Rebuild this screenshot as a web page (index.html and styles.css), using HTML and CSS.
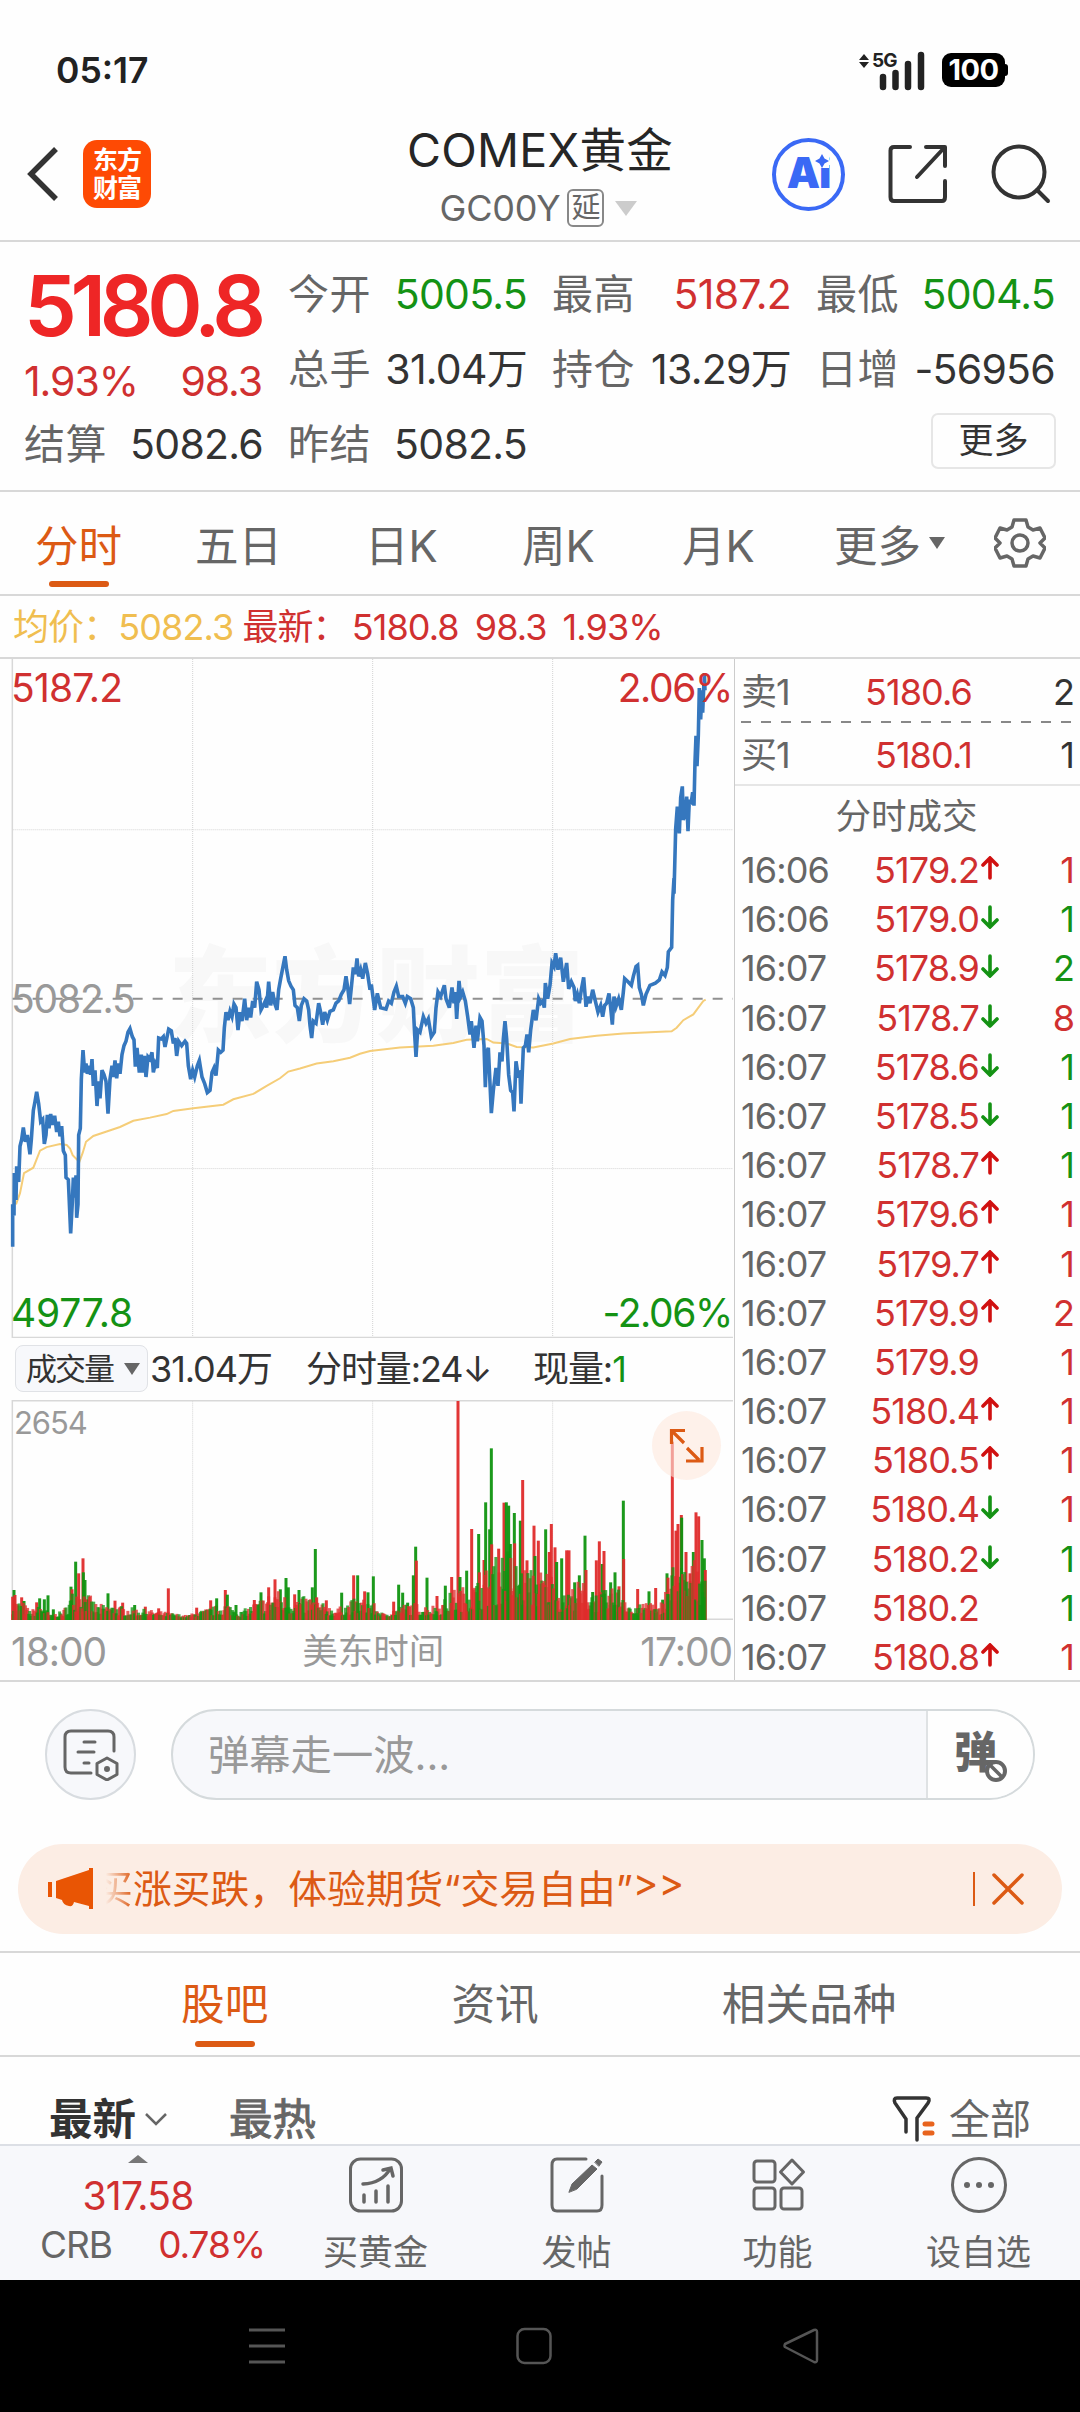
FILE: index.html
```html
<!DOCTYPE html>
<html lang="zh-CN">
<head>
    <meta charset="UTF-8">
    <meta name="viewport" content="width=device-width, initial-scale=1.0">
    <title>COMEX黄金</title>
    <link rel="stylesheet" href="styles.css">
</head>
<body>
    <div class="status-bar">
        <span class="clock">05:17</span>
        <div class="status-icons">
            <svg class="signal" width="70" height="44" viewBox="0 -4 70 44">
                <path d="M6 2l5 6H1zM6 16l5-6H1z" fill="#222"/>
                <text x="14" y="15" class="signal-text">5G</text>
                <path d="M25 25v10M37.500 21v14M50 12v23M63 3v32" stroke="#222" stroke-width="6.500" stroke-linecap="round"/>
            </svg>
            <span class="battery">100</span>
        </div>
    </div>

    <header class="header">
        <div class="header-left">
            <svg width="34" height="56" viewBox="0 0 34 56" fill="none" stroke="#333" stroke-width="5.500"><path d="M31 3L6 28l25 25"/></svg>
            <div class="logo"><span>东方</span><span>财富</span></div>
        </div>
        <div class="header-title">
            <h1>COMEX黄金</h1>
            <div class="code">GC00Y<span class="delay">延</span><i class="caret"></i></div>
        </div>
        <div class="header-right">
            <div class="ai">Ai<svg class="spark" width="14" height="14" viewBox="0 0 14 14"><path d="M7 0l2.500 4.500L14 7l-4.500 2.500L7 14 4.500 9.500 0 7l4.500-2.500z" fill="#3a69f5"/></svg></div>
            <svg width="60" height="60" viewBox="0 0 60 60" fill="none" stroke="#333" stroke-width="4" stroke-linecap="round" stroke-linejoin="round">
                <path d="M22 3H6Q2.500 3 2.500 6.500V53Q2.500 57 6 57H54Q57 57 57 53V37M38 3H57V22M56 4L29 33"/>
            </svg>
            <svg width="60" height="60" viewBox="0 0 60 60" fill="none" stroke="#333" stroke-width="4" stroke-linecap="round">
                <circle cx="28" cy="28" r="25.500"/><path d="M46 46l11 11"/>
            </svg>
        </div>
    </header>

    <section class="quote">
        <div class="last">
            <div class="last-price">5180.8</div>
            <div class="last-change"><span>1.93%</span><span>98.3</span></div>
        </div>
        <div class="cell"><label>今开</label><b class="green">5005.5</b></div>
        <div class="cell"><label>最高</label><b class="red">5187.2</b></div>
        <div class="cell"><label>最低</label><b class="green">5004.5</b></div>
        <div class="cell"><label>总手</label><b>31.04万</b></div>
        <div class="cell"><label>持仓</label><b>13.29万</b></div>
        <div class="cell"><label>日增</label><b>-56956</b></div>
        <div class="cell"><label>结算</label><b>5082.6</b></div>
        <div class="cell"><label>昨结</label><b>5082.5</b></div>
        <div></div>
        <div class="cell more"><span class="more-btn">更多</span></div>
    </section>

    <nav class="period-tabs">
        <span class="active">分时</span>
        <span>五日</span>
        <span>日K</span>
        <span>周K</span>
        <span>月K</span>
        <span class="period-more">更多<i class="caret-sm"></i></span>
        <svg width="52" height="52" viewBox="0 0 52 52" fill="none" stroke="#666" stroke-width="3.500" stroke-linejoin="round">
            <path d="M20 3h12l2 7 5 3 7-2 5 10-5 5 5 5-5 10-7-2-5 3-2 7H20l-2-7-5-3-7 2-5-10 5-5-5-5 5-10 7 2 5-3z"/>
            <circle cx="26" cy="26" r="8"/>
        </svg>
    </nav>

    <div class="legend">
        <span class="avg">均价：5082.3</span>
        <span class="now">最新：<span class="now-price">5180.8</span><em>98.3</em><em>1.93%</em></span>
    </div>

    <section class="market">
        <div class="charts">
            <div class="price-chart">
                <div class="watermark">东方财富</div>
                <svg class="plot" width="734" height="679" viewBox="0 20 2202 1519" preserveAspectRatio="none">
                    <g class="grid">
                        <path d="M578 20V1538M1118 20V1538M1658 20V1538M38 402H2199M38 1160H2199"/>
                    </g>
                    <path class="axis" d="M37 20V1538H2199"/>
                    <path class="prev-close" d="M38 780H2199"/>
                    <polyline class="avg-line" points="48,1240 60,1215 72,1170 100,1158 120,1120 140,1112 180,1105 200,1107 210,1115 218,1130 238,1145 248,1125 258,1100 280,1087 320,1077 360,1067 400,1053 450,1046 500,1038 520,1031 580,1025 670,1017 700,1005 760,993 800,975 840,958 865,943 900,936 950,925 1000,920 1050,912 1080,903 1110,897 1200,889 1300,885 1360,879 1400,872 1460,870 1480,878 1520,880 1550,888 1600,889 1660,880 1710,870 1790,863 1870,858 2015,853 2030,845 2050,828 2080,815 2095,800 2110,785 2117,782"/>
                    <polyline class="price-line" id="priceLine"/>
                </svg>
                <span class="tag top-left red">5187.2</span>
                <span class="tag top-right red">2.06%</span>
                <span class="tag middle">5082.5</span>
                <span class="tag bottom-left green">4977.8</span>
                <span class="tag bottom-right green">-2.06%</span>
            </div>
            <div class="volume-legend">
                <span class="select">成交量<i class="caret-sm"></i></span>
                <span class="total">31.04万</span>
                <span class="minute">分时量:24↓</span>
                <span>现量:<b class="green">1</b></span>
            </div>
            <div class="volume-chart">
                <svg width="734" height="220" viewBox="0 180 2202 660" preserveAspectRatio="none">
                    <g class="grid"><path d="M578 182V838M1118 182V838M1658 182V838"/></g>
                    <path class="axis" d="M2199 838H37V182H2199"/>
                    <g id="volumeBars"></g>
                </svg>
                <span class="volume-max">2654</span>
                <div class="expand">
                    <svg width="36" height="36" viewBox="0 0 36 36" fill="none" stroke="#dc5a14" stroke-width="3.200"><path d="M17 3.500H3.500V17M4 4l12 12M19 21l12 12M18 34H34V20"/></svg>
                </div>
            </div>
            <div class="time-axis"><span>18:00</span><span>美东时间</span><span>17:00</span></div>
        </div>

        <div class="trades">
            <div class="book sell"><span>卖1</span><b>5180.6</b><i>2</i></div>
            <svg class="dash" width="345" height="2"><path d="M6 1H338" stroke="#888" stroke-width="2" stroke-dasharray="10 10"/></svg>
            <div class="book buy"><span>买1</span><b>5180.1</b><i>1</i></div>
            <div class="trades-title">分时成交</div>
            <div id="tradeRows"></div>
        </div>
    </section>

    <div class="comment-bar">
        <div class="round-btn">
            <svg width="56" height="52" viewBox="0 0 56 52" fill="none" stroke="#666" stroke-width="3" stroke-linecap="round">
                <path d="M51 22V8Q51 2 45 2H8Q2 2 2 8V38Q2 44 8 44H28M21 13H32M15 23H31M21 34H26"/>
                <path d="M44 29l10 5.500v11L44 51l-10-5.500v-11z" stroke-linejoin="round"/><circle cx="44" cy="40" r="2" fill="#666" stroke-width="2"/>
            </svg>
        </div>
        <div class="comment-input">
            <span>弹幕走一波...</span>
            <div class="danmu">弹<svg width="24" height="24" viewBox="0 0 24 24"><circle cx="12" cy="12" r="9" fill="#fff" stroke="#666" stroke-width="4"/><path d="M6 6l12 12" stroke="#666" stroke-width="3.500"/></svg></div>
        </div>
    </div>

    <div class="notice">
        <svg width="46" height="42" viewBox="0 0 46 42" fill="#e95504"><path d="M0 14h4v15H0zM8 13L41 2V0h4v41h-4v-3l-15-4q-1 5-5 4-6-1-7-6l-6-2z"/></svg>
        <div class="notice-text"><span class="faded">买</span>涨买跌，体验期货<q>交易自由</q>&gt;&gt;</div>
        <svg class="close" width="34" height="34" viewBox="0 0 34 34" stroke="#dc5a14" stroke-width="3.500" stroke-linecap="round"><path d="M3 3l28 28M31 3L3 31"/></svg>
    </div>

    <nav class="section-tabs">
        <span class="active">股吧</span>
        <span>资讯</span>
        <span>相关品种</span>
    </nav>

    <div class="filter-row">
        <b>最新</b>
        <svg width="22" height="14" viewBox="0 0 22 14" fill="none" stroke="#666" stroke-width="2.500"><path d="M1 2l10 10L21 2"/></svg>
        <span class="hot">最热</span>
        <svg class="funnel" width="44" height="46" viewBox="0 0 44 46" fill="none" stroke="#333" stroke-width="3.500" stroke-linecap="round">
            <path d="M14 36V23L3 7Q1 2 5 2H34Q39 2 36 7L25 22V44"/>
            <path d="M33 28H40M33 37H40" stroke="#e8641e" stroke-width="5"/>
        </svg>
        <span class="all">全部</span>
    </div>

    <footer class="tab-bar">
        <div class="index">
            <i class="caret-up"></i>
            <div class="index-price">317.58</div>
            <div class="index-row"><span>CRB</span><span class="red">0.78%</span></div>
        </div>
        <div class="item">
            <svg width="56" height="56" viewBox="0 0 56 56" fill="none" stroke="#666" stroke-width="3" stroke-linecap="round">
                <rect x="2.500" y="2" width="51" height="52" rx="10"/>
                <path d="M15 27Q34 26 42 12M35 13l8-2 2 8M16 38v7M28 34v11M40 29v16" stroke-width="3.500"/>
            </svg>
            <span>买黄金</span>
        </div>
        <div class="item">
            <svg width="56" height="56" viewBox="0 0 56 56" fill="none" stroke="#666" stroke-width="3" stroke-linecap="round">
                <path d="M37 2H8Q3 2 3 8V48Q3 54 8 54H48Q53 54 53 48V19"/>
                <path d="M20 35l3-8L43 8l5 4-20 20zM46 5l3-3 4 3-3 4z" fill="#666" stroke-width="1"/>
            </svg>
            <span>发帖</span>
        </div>
        <div class="item">
            <svg width="56" height="56" viewBox="0 0 56 56" fill="none" stroke="#666" stroke-width="3" stroke-linejoin="round">
                <rect x="4" y="4" width="21" height="21" rx="3"/><rect x="4" y="31" width="21" height="21" rx="3"/><rect x="31" y="31" width="21" height="21" rx="3"/>
                <path d="M42 3l11.500 12L42 27 30.500 15z"/>
            </svg>
            <span>功能</span>
        </div>
        <div class="item">
            <svg width="58" height="58" viewBox="0 0 58 58" fill="none" stroke="#666" stroke-width="3">
                <circle cx="29" cy="29" r="26.500"/>
                <g fill="#666" stroke="none"><circle cx="17" cy="29" r="3"/><circle cx="29" cy="29" r="3"/><circle cx="41" cy="29" r="3"/></g>
            </svg>
            <span>设自选</span>
        </div>
    </footer>

    <div class="system-nav">
        <svg width="36" height="38" viewBox="0 0 36 38" stroke="#555" stroke-width="3"><path d="M0 3H36M0 19H36M0 35H36"/></svg>
        <svg width="36" height="38" viewBox="0 0 36 38" fill="none" stroke="#555" stroke-width="2.500"><rect x="1.500" y="2" width="33" height="34" rx="7"/></svg>
        <svg width="36" height="38" viewBox="0 0 36 38" fill="none" stroke="#555" stroke-width="2.500" stroke-linejoin="round"><path d="M31 3L2 17Q1 19 2 20L31 35Q34 36 34 33V5Q34 2 31 3z"/></svg>
    </div>

    <script src="script.js"></script>
</body>
</html>
```
FILE: styles.css
```css
* {
    box-sizing: border-box;
}

body {
    margin: 0;
    width: 1080px;
    height: 2412px;
    overflow: hidden;
    background-color: #fefefe;
    color: #333;
    font-family: Inter, "Noto Sans CJK SC", sans-serif;
    font-size: 36px;
    font-weight: 400;
    letter-spacing: -0.03em;
}

svg {
    display: block;
    flex: none;
}

i, em, b {
    font-style: normal;
    font-weight: 400;
}

.red {
    color: #d03030;
}

.green {
    color: #149214;
}

/* status bar */
.status-bar {
    display: flex;
    justify-content: space-between;
    align-items: center;
    height: 112px;
    padding: 28px 75px 0 56px;
}

.clock {
    font-size: 35.5px;
    font-weight: 600;
    color: #222;
    letter-spacing: 0;
}

.status-icons {
    display: flex;
    align-items: center;
    gap: 14px;
}

.signal {
    overflow: visible;
}

.signal-text {
    font-size: 19px;
    font-weight: 700;
    letter-spacing: -1px;
    fill: #222;
}

.battery {
    position: relative;
    width: 63px;
    height: 34px;
    border-radius: 9px;
    background-color: #000;
    color: #fff;
    font-size: 29px;
    font-weight: 700;
    line-height: 34px;
    text-align: center;
    letter-spacing: -0.5px;
}

.battery::after {
    content: "";
    position: absolute;
    right: -3px;
    top: 11px;
    width: 4px;
    height: 12px;
    border-radius: 0 3px 3px 0;
    background-color: #000;
}

/* header */
.header {
    display: grid;
    grid-template-columns: 1fr auto 1fr;
    align-items: center;
    height: 130px;
    padding-bottom: 4px;
    border-bottom: 2px solid #d8d8d8;
}

.header-left {
    display: flex;
    align-items: center;
    gap: 24px;
    padding-left: 25px;
}

.logo {
    display: flex;
    flex-direction: column;
    justify-content: center;
    align-items: center;
    width: 68px;
    height: 68px;
    border-radius: 14px;
    background-color: #fe4a04;
    color: #fff;
    font-size: 25px;
    font-weight: 700;
    line-height: 28px;
    letter-spacing: -1px;
}

.header-title {
    padding-top: 8px;
    text-align: center;
}

.header-title h1 {
    margin: 0;
    font-size: 46.5px;
    font-weight: 400;
    line-height: 60px;
    letter-spacing: 0.005em;
    color: #262626;
}

.code {
    display: flex;
    align-items: center;
    justify-content: center;
    height: 56px;
    padding-right: 3px;
    font-size: 36px;
    letter-spacing: -0.005em;
    color: #666;
}

.delay {
    width: 37px;
    height: 38px;
    margin: 0 11px 0 7px;
    border: 2px solid #888;
    border-radius: 6px;
    font-size: 29px;
    line-height: 33px;
    letter-spacing: 0;
}

.caret {
    border: 11px solid transparent;
    border-top: 15px solid #ccc;
    border-bottom: 0;
}

.caret-sm {
    border: 8px solid transparent;
    border-top: 12px solid #666;
    border-bottom: 0;
}

.header-right {
    display: flex;
    align-items: center;
    justify-content: flex-end;
    gap: 43px;
    padding-right: 29px;
}

.ai {
    position: relative;
    width: 73px;
    height: 73px;
    border: 4px solid #3a69f5;
    border-radius: 50%;
    color: #3a69f5;
    font-size: 42px;
    font-weight: 900;
    line-height: 62px;
    text-align: center;
}

.spark {
    position: absolute;
    right: 12px;
    top: 12px;
    background-color: #fefefe;
}

/* quote */
.quote {
    display: grid;
    grid-template-columns: repeat(4, 238px);
    grid-template-rows: repeat(3, 75px);
    column-gap: 26px;
    height: 250px;
    padding: 15px 25px 0 24px;
    border-bottom: 2px solid #d8d8d8;
}

.last {
    grid-row: span 2;
    color: #ee2626;
}

.last-price {
    margin-top: 7px;
    font-size: 84px;
    font-weight: 600;
    line-height: 84px;
    letter-spacing: -0.075em;
}

.last-change {
    display: flex;
    justify-content: space-between;
    font-size: 41px;
    line-height: 66px;
    color: #d03030;
}

.cell {
    display: flex;
    justify-content: space-between;
    align-items: center;
    margin-right: -1px;
    font-size: 41px;
    line-height: 75px;
    letter-spacing: -0.018em;
}

.cell label {
    color: #666;
    letter-spacing: 0.01em;
}

.more {
    justify-content: flex-end;
}

.more-btn {
    width: 125px;
    height: 56px;
    margin: -7px -1px 0 0;
    border: 2px solid #e6e6e6;
    border-radius: 7px;
    font-size: 35px;
    line-height: 51px;
    text-align: center;
    letter-spacing: 0;
}

/* tabs */
.period-tabs {
    display: grid;
    grid-template-columns: 160px 170px 157px 160px 152px 160px 52px;
    align-items: center;
    justify-items: start;
    height: 104px;
    padding-left: 35px;
    border-bottom: 2px solid #d8d8d8;
    font-size: 43.5px;
    color: #666;
    letter-spacing: 0;
}

.active {
    position: relative;
    color: #dc5a14;
}

.active::after {
    content: "";
    position: absolute;
    left: 50%;
    bottom: -12px;
    width: 60px;
    height: 6px;
    margin-left: -30px;
    border-radius: 3px;
    background-color: #dc5a14;
}

.period-more {
    display: flex;
    align-items: center;
    gap: 8px;
}

.legend {
    display: flex;
    gap: 9px;
    height: 63px;
    padding-left: 13px;
    border-bottom: 2px solid #d8d8d8;
    font-size: 36px;
    line-height: 63px;
    letter-spacing: -0.025em;
    white-space: nowrap;
}

.legend .avg {
    color: #f0be50;
}

.legend .now {
    color: #d03030;
}

.now-price {
    margin-left: 4px;
}

.legend em {
    margin-left: 16px;
}

/* charts */
.market {
    display: flex;
    height: 1023px;
    border-bottom: 2px solid #d8d8d8;
}

.charts {
    width: 735px;
    border-right: 1px solid #ccc;
}

.price-chart {
    position: relative;
    height: 679px;
}

.plot {
    position: relative;
}

.watermark {
    position: absolute;
    left: 168px;
    top: 262px;
    font-size: 104px;
    font-weight: 900;
    line-height: 150px;
    letter-spacing: 0;
    color: #f8f8f8;
}

.grid path {
    fill: none;
    stroke: #d4d4d4;
    stroke-width: 1;
    stroke-dasharray: 1 1;
    vector-effect: non-scaling-stroke;
}

.axis {
    fill: none;
    stroke: #d8d8d8;
    stroke-width: 1.5;
    vector-effect: non-scaling-stroke;
}

.prev-close {
    stroke: #909090;
    stroke-width: 2;
    stroke-dasharray: 10 10;
    vector-effect: non-scaling-stroke;
}

.avg-line, .price-line {
    fill: none;
    vector-effect: non-scaling-stroke;
}

.avg-line {
    stroke: #f5cd78;
    stroke-width: 2;
}

.price-line {
    stroke: #3577be;
    stroke-width: 3.6;
}

.tag {
    position: absolute;
    font-size: 39px;
    line-height: 44px;
    letter-spacing: -0.02em;
}

.top-left {
    left: 11px;
    top: 7px;
}

.top-right {
    right: 2px;
    top: 7px;
    letter-spacing: -0.035em;
}

.middle {
    left: 11px;
    top: 318px;
    letter-spacing: -0.03em;
    color: #999;
}

.bottom-left {
    left: 11px;
    bottom: 3px;
    letter-spacing: -0.005em;
}

.bottom-right {
    right: 2px;
    bottom: 3px;
    letter-spacing: -0.035em;
}

.volume-legend {
    display: flex;
    align-items: center;
    height: 62px;
    padding: 0 0 1px 15px;
    font-size: 36px;
    line-height: 60px;
    white-space: nowrap;
}

.select {
    display: flex;
    align-items: center;
    gap: 11px;
    width: 133px;
    height: 47px;
    margin-right: 2px;
    padding-left: 10px;
    border: 1px solid #e0e2e6;
    border-radius: 8px;
    background-color: #f7f8fb;
    font-size: 31px;
    letter-spacing: -2px;
}

.total {
    width: 156px;
}

.minute {
    width: 227px;
}

.volume-chart {
    position: relative;
    height: 220px;
}

.volume-max {
    position: absolute;
    left: 14px;
    top: 4px;
    font-size: 31px;
    color: #999;
}

.expand {
    position: absolute;
    left: 652px;
    top: 11px;
    width: 69px;
    height: 69px;
    padding: 16px;
    border-radius: 50%;
    background-color: rgba(253, 232, 220, 0.6);
}

.time-axis {
    display: flex;
    justify-content: space-between;
    padding: 0 2px 0 11px;
    font-size: 39px;
    line-height: 63px;
    color: #999;
}

.time-axis span:nth-child(2) {
    font-size: 35.5px;
    letter-spacing: 0;
}

/* trades */
.trades {
    width: 345px;
}

.book, .trade {
    display: flex;
    padding: 0 6px 0 6px;
    letter-spacing: -0.025em;
}

.book span, .trade span {
    width: 105px;
    color: #666;
}

.book b, .trade b {
    width: 133px;
    text-align: right;
    color: #d03030;
}

.book b {
    width: 126px;
}

.book i, .trade i {
    flex: 1;
    text-align: right;
}

.book {
    height: 62px;
    line-height: 67px;
}

.book.buy {
    height: 63px;
    line-height: 65px;
    border-bottom: 2px solid #e6e6e6;
}

.trades-title {
    height: 59px;
    padding-right: 2px;
    font-size: 35.5px;
    line-height: 61px;
    text-align: center;
    letter-spacing: 0;
    color: #666;
}

.trade {
    height: 49.2px;
    line-height: 50px;
}

.trade svg {
    width: 18px;
    height: 24px;
    margin: 11px 0 0 2px;
    fill: none;
    stroke-width: 3.6;
    stroke-linecap: round;
}

.up {
    stroke: #d01010;
}

.down {
    stroke: #149214;
}

.none {
    visibility: hidden;
}

/* comment bar */
.comment-bar {
    display: flex;
    gap: 35px;
    padding: 27px 45px 0;
}

.round-btn {
    display: flex;
    align-items: center;
    justify-content: center;
    width: 91px;
    height: 91px;
    border: 2px solid #d8dce0;
    border-radius: 50%;
    background-color: #f7f8fb;
}

.comment-input {
    display: flex;
    flex: 1;
    height: 91px;
    border: 2px solid #d5dadc;
    border-radius: 46px;
    overflow: hidden;
    background-color: #f7f8fb;
    font-size: 41.3px;
    line-height: 89px;
    letter-spacing: 0;
    color: #999;
}

.comment-input span {
    flex: 1;
    padding-left: 35px;
}

.danmu {
    position: relative;
    width: 107px;
    padding-left: 26px;
    border-left: 2px solid #dfe2e4;
    background-color: #fefefe;
    font-size: 43px;
    font-weight: 900;
    line-height: 82px;
    color: #666;
}

.danmu svg {
    position: absolute;
    left: 56px;
    top: 48px;
}

.notice {
    display: flex;
    align-items: center;
    height: 90px;
    margin: 44px 18px 0;
    padding: 0 37px 0 30px;
    border-radius: 45px;
    background-color: #fcede4;
    color: #dc5a14;
}

.notice-text {
    flex: 1;
    display: flex;
    justify-content: flex-start;
    padding-bottom: 7px;
    font-size: 38.8px;
    letter-spacing: 0;
    white-space: nowrap;
}

.notice-text q {
    quotes: "“" "”";
}

.faded {
    width: 39px;
    background: linear-gradient(90deg, rgba(220, 90, 20, 0) 30%, #dc5a14 100%);
    -webkit-background-clip: text;
    background-clip: text;
    color: transparent;
}

.close {
    box-sizing: content-box;
    padding-left: 16px;
    border-left: 2px solid #dc5a14;
}

.section-tabs {
    display: flex;
    gap: 183px;
    height: 106px;
    margin-top: 17px;
    padding-left: 181px;
    border-top: 2px solid #d8d8d8;
    border-bottom: 2px solid #d8d8d8;
    font-size: 43.7px;
    line-height: 104px;
    letter-spacing: 0;
    color: #666;
}

.section-tabs .active::after {
    bottom: 8px;
}

.filter-row {
    display: flex;
    align-items: center;
    height: 87px;
    padding: 36px 49px 0 49px;
    font-size: 43.5px;
    line-height: 50px;
    letter-spacing: 0;
    color: #666;
}

.filter-row b {
    margin-right: 9px;
    font-weight: 700;
    color: #333;
}

.hot {
    margin-left: 62px;
    -webkit-text-stroke: 0.9px #666;
}

.funnel {
    margin-left: auto;
}

.all {
    margin-left: 13px;
    font-size: 41px;
}

/* bottom bar */
.tab-bar {
    display: flex;
    height: 136px;
    border-top: 2px solid #dcdfe5;
    background-color: #f7f8fb;
}

.index {
    width: 275px;
    padding: 9px 10px 0 40px;
}

.caret-up {
    display: block;
    width: 0;
    margin-left: 88px;
    border: 10px solid transparent;
    border-top: 0;
    border-bottom: 8px solid #777;
}

.index-price {
    width: 196px;
    margin-top: 11px;
    font-size: 39px;
    line-height: 44px;
    letter-spacing: -0.02em;
    text-align: center;
    color: #d03030;
}

.index-row {
    display: flex;
    justify-content: space-between;
    font-size: 37px;
    line-height: 54px;
    color: #666;
}

.item {
    display: flex;
    flex-direction: column;
    align-items: center;
    width: 201px;
    padding-top: 10px;
    font-size: 35px;
    letter-spacing: 0;
    color: #666;
}

.item svg {
    height: 58px;
}

.item span {
    line-height: 76px;
}

.system-nav {
    display: flex;
    align-items: center;
    justify-content: center;
    gap: 231px;
    height: 132px;
    padding-right: 12px;
    background-color: #000;
}
```
FILE: script.js
```js
// intraday price line, [x, y] in plot units
const price = [
    38,1335, 38,1240, 42,1265, 43,1170, 48,1230, 50,1155, 56,1190, 60,1110, 65,1095, 70,1068, 76,1100, 82,1085, 90,1128, 94,1095, 100,1030, 105,1010, 110,988, 116,1015, 122,1055, 128,1050, 133,1105, 138,1085, 142,1040, 147,1070, 152,1038, 158,1062, 164,1042, 170,1078, 175,1055, 180,1088, 185,1065, 190,1120, 196,1130, 198,1180, 205,1185, 212,1305, 217,1235, 220,1180, 224,1225, 228,1175, 230,1270, 234,1240, 236,1085, 241,1070, 244,960, 249,895, 254,945, 258,925, 262,948, 268,930, 272,950, 276,915, 280,975, 285,940, 291,1020, 296,965, 300,1003, 306,940, 312,950, 318,965, 324,1037, 330,960, 336,930, 340,955, 345,918, 350,958, 355,925, 360,948, 366,905, 372,885, 378,875, 384,855, 390,847, 397,865, 402,872, 406,932, 411,890, 418,945, 424,905, 428,945, 433,908, 438,955, 444,910, 450,915, 456,900, 460,945, 466,925, 472,935, 476,868, 484,870, 490,865, 495,888, 500,870, 506,848, 514,852, 520,880, 525,868, 530,908, 536,875, 545,885, 555,875, 560,880, 565,930, 572,960, 578,940, 584,955, 592,930, 598,918, 606,955, 614,970, 622,990, 630,985, 636,945, 642,935, 648,952, 655,895, 662,900, 669,895, 673,845, 678,810, 684,828, 690,808, 696,820, 702,792, 708,800, 714,850, 720,810, 726,830, 734,780, 740,828, 746,800, 752,822, 758,785, 764,800, 770,742, 777,760, 783,805, 790,795, 796,785, 800,800, 806,742, 812,795, 818,765, 824,790, 831,805, 836,760, 842,735, 848,712, 855,685, 860,715, 866,740, 873,752, 880,760, 885,795, 892,800, 898,830, 904,795, 912,780, 920,785, 926,805, 930,840, 935,868, 940,830, 948,835, 956,790, 962,810, 968,838, 974,810, 982,828, 990,808, 1000,805, 1008,790, 1016,785, 1024,770, 1032,760, 1038,730, 1044,760, 1049,792, 1056,740, 1060,710, 1066,725, 1071,690, 1076,730, 1082,715, 1088,735, 1096,700, 1103,725, 1110,760,
    1114,748, 1124,805, 1132,768, 1142,800, 1158,803, 1166,785, 1174,790, 1182,765, 1189,752, 1196,775, 1208,775, 1216,790, 1222,775, 1232,780, 1240,800, 1244,860, 1248,910, 1253,850, 1260,855, 1270,820, 1278,835, 1285,825, 1294,865, 1303,855, 1308,800, 1314,765, 1322,775, 1333,750, 1338,780, 1348,800, 1356,755, 1362,790, 1366,765, 1370,825, 1377,740, 1382,775, 1388,765, 1396,785, 1403,820, 1410,860, 1414,830, 1422,890, 1428,840, 1432,875, 1440,822, 1446,830, 1452,885, 1456,978, 1460,900, 1465,890, 1470,970, 1474,1036, 1480,985, 1488,935, 1494,975, 1500,900, 1506,920, 1510,870, 1515,830, 1520,870, 1526,950, 1532,985, 1538,990, 1542,1032, 1548,920, 1554,950, 1560,945, 1563,1015, 1570,890, 1576,885, 1581,860, 1586,900, 1592,850, 1600,805, 1608,828, 1616,780, 1622,790, 1628,785, 1633,800, 1636,745, 1643,780, 1650,750, 1656,700, 1662,708, 1667,678, 1674,715, 1682,688, 1690,742, 1700,700, 1706,758, 1714,742, 1722,755, 1726,785, 1732,770, 1738,790, 1744,760, 1751,732, 1758,798, 1764,775, 1770,790, 1778,760, 1786,785, 1794,810, 1802,795, 1808,820, 1814,795, 1820,790, 1827,768, 1832,800, 1837,838, 1842,775, 1848,798, 1856,780, 1864,805, 1870,765, 1874,735, 1884,742, 1894,750, 1900,730, 1908,708, 1913,705, 1918,755, 1924,770, 1930,795, 1938,770, 1950,750, 1966,745, 1978,738, 1986,720, 1995,728, 2002,710, 2005,675, 2015,665, 2018,560, 2022,510, 2022,545, 2027,400, 2032,350, 2038,410, 2042,330, 2047,305, 2050,380, 2056,365, 2060,328, 2064,405, 2068,335, 2073,345, 2078,318, 2082,348, 2085,250, 2088,192, 2091,260, 2095,190, 2098,85, 2102,155, 2106,90, 2108,140, 2113,52, 2115,90
];
document.getElementById('priceLine').setAttribute('points', price.join(' '));

// volume: typical height along the session, then the single bars that stand out
const level = [
    [38, 60], [70, 50], [90, 25], [130, 45], [150, 10], [190, 25], [225, 100], [255, 90], [290, 45], [350, 40],
    [420, 30], [500, 20], [560, 10], [620, 30], [680, 50], [720, 20], [780, 60], [830, 90], [870, 60], [930, 70],
    [960, 50], [1010, 30], [1060, 60], [1110, 60], [1150, 15], [1200, 40], [1235, 50], [1280, 40], [1320, 45],
    [1360, 90], [1400, 100], [1440, 120], [1470, 170], [1520, 220], [1560, 160], [1600, 150], [1650, 150],
    [1690, 70], [1740, 120], [1790, 80], [1830, 90], [1870, 100], [1900, 25], [1950, 70], [1970, 20], [2000, 100],
    [2025, 190], [2060, 150], [2095, 200], [2117, 150]
];
const peaks = [
    [42, 750, 'g'], [38, 770, 'r'], [45, 765, 'r'], [65, 772, 'r'], [72, 783, 'g'], [110, 787, 'r'], [119, 775, 'g'],
    [133, 778, 'g'], [144, 766, 'g'], [160, 808, 'g'], [213, 740, 'g'], [216, 748, 'r'], [227, 665, 'g'],
    [236, 700, 'r'], [249, 655, 'r'], [250, 697, 'g'], [255, 720, 'g'], [261, 778, 'r'], [324, 760, 'g'],
    [345, 782, 'r'], [368, 788, 'r'], [404, 795, 'g'], [436, 800, 'r'], [476, 805, 'r'], [505, 745, 'r'],
    [590, 803, 'r'], [632, 781, 'r'], [650, 775, 'g'], [676, 750, 'r'], [682, 764, 'g'], [708, 795, 'g'],
    [763, 780, 'r'], [783, 757, 'g'], [806, 742, 'r'], [825, 718, 'r'], [841, 748, 'g'], [858, 714, 'g'],
    [865, 742, 'g'], [884, 763, 'r'], [897, 750, 'g'], [937, 742, 'g'], [946, 627, 'g'], [950, 772, 'r'],
    [979, 781, 'r'], [1025, 758, 'g'], [1061, 706, 'r'], [1073, 706, 'g'], [1094, 754, 'r'], [1104, 757, 'g'],
    [1120, 709, 'g'], [1181, 785, 'r'], [1196, 734, 'g'], [1208, 758, 'g'], [1223, 788, 'g'], [1240, 706, 'g'],
    [1247, 620, 'g'], [1249, 662, 'r'], [1281, 713, 'g'], [1311, 768, 'r'], [1336, 737, 'g'], [1355, 711, 'r'],
    [1374, 183, 'r'], [1380, 711, 'g'], [1400, 692, 'g'], [1415, 567, 'r'], [1436, 582, 'g'], [1438, 697, 'r'],
    [1452, 660, 'r'], [1457, 487, 'g'], [1469, 568, 'g'], [1474, 325, 'g'], [1475, 613, 'r'], [1496, 626, 'r'],
    [1512, 488, 'r'], [1519, 487, 'g'], [1526, 497, 'g'], [1531, 612, 'g'], [1543, 519, 'g'], [1544, 610, 'r'],
    [1561, 542, 'g'], [1568, 420, 'r'], [1581, 661, 'r'], [1602, 557, 'r'], [1605, 648, 'g'], [1615, 602, 'r'],
    [1637, 568, 'g'], [1648, 636, 'r'], [1654, 552, 'r'], [1665, 622, 'r'], [1670, 666, 'g'], [1685, 655, 'g'],
    [1700, 631, 'r'], [1707, 631, 'r'], [1724, 727, 'g'], [1738, 706, 'g'], [1755, 587, 'g'], [1758, 690, 'r'],
    [1778, 756, 'g'], [1789, 661, 'r'], [1798, 604, 'r'], [1807, 672, 'g'], [1812, 633, 'r'], [1832, 727, 'g'],
    [1845, 697, 'g'], [1857, 739, 'r'], [1870, 482, 'g'], [1871, 657, 'r'], [1913, 747, 'r'], [1947, 754, 'g'],
    [1967, 744, 'r'], [1988, 779, 'g'], [2001, 700, 'g'], [2004, 713, 'r'], [2017, 305, 'r'], [2028, 572, 'r'],
    [2034, 552, 'r'], [2044, 525, 'r'], [2045, 533, 'g'], [2058, 636, 'r'], [2070, 700, 'r'], [2080, 636, 'g'],
    [2088, 517, 'r'], [2096, 529, 'r'], [2106, 600, 'g'], [2113, 655, 'g'], [2116, 690, 'r']
];

const BASE = 840;
const colors = { r: '#e02c2c', g: '#109410' };
let seed = 7;
function random() {
    seed = (seed * 16807) % 2147483647;
    return seed / 2147483647;
}

function levelAt(x) {
    let i = 1;
    while (i < level.length - 1 && level[i][0] < x) i++;
    const [x0, h0] = level[i - 1];
    const [x1, h1] = level[i];
    return h0 + (h1 - h0) * (x - x0) / (x1 - x0);
}

function bar(x, top, color, opacity) {
    return `<path d="M${x} ${BASE}V${top.toFixed(1)}" stroke="${colors[color]}" stroke-width="9" opacity="${opacity}"/>`;
}

let bars = '';
peaks.forEach(p => {
    bars += bar(p[0], p[1], p[2], 0.95);
});
for (let x = 38; x < 2118; x += 3.2) {
    const h = levelAt(x) * (0.2 + 0.8 * Math.pow(random(), 1.2));
    bars += bar(x.toFixed(1), BASE - h - 5, random() > 0.5 ? 'r' : 'g', 0.75);
}
document.getElementById('volumeBars').innerHTML = bars;

// time, price, direction, volume, volume colour
const trades = [
    ['16:06', '5179.2', 'up', 1, 'red'],
    ['16:06', '5179.0', 'down', 1, 'green'],
    ['16:07', '5178.9', 'down', 2, 'green'],
    ['16:07', '5178.7', 'down', 8, 'red'],
    ['16:07', '5178.6', 'down', 1, 'green'],
    ['16:07', '5178.5', 'down', 1, 'green'],
    ['16:07', '5178.7', 'up', 1, 'green'],
    ['16:07', '5179.6', 'up', 1, 'red'],
    ['16:07', '5179.7', 'up', 1, 'red'],
    ['16:07', '5179.9', 'up', 2, 'red'],
    ['16:07', '5179.9', 'none', 1, 'red'],
    ['16:07', '5180.4', 'up', 1, 'red'],
    ['16:07', '5180.5', 'up', 1, 'red'],
    ['16:07', '5180.4', 'down', 1, 'red'],
    ['16:07', '5180.2', 'down', 1, 'green'],
    ['16:07', '5180.2', 'none', 1, 'green'],
    ['16:07', '5180.8', 'up', 1, 'red']
];
const arrows = {
    up: 'M9 22V2M2 9l7-7 7 7',
    down: 'M9 2V22M2 15l7 7 7-7',
    none: ''
};
document.getElementById('tradeRows').innerHTML = trades.map(([time, value, dir, volume, color]) => `
    <div class="trade">
        <span>${time}</span><b>${value}</b>
        <svg class="${dir}" viewBox="0 0 18 24"><path d="${arrows[dir]}"/></svg>
        <i class="${color}">${volume}</i>
    </div>`).join('');
```
